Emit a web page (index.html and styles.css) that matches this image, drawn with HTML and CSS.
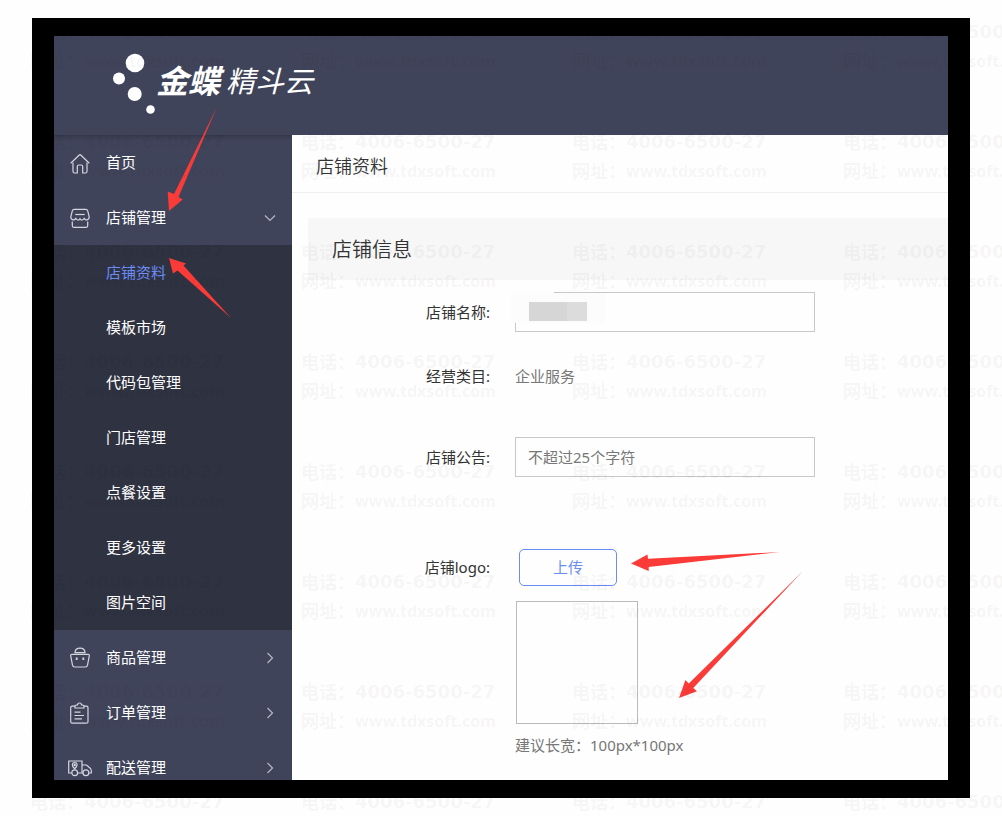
FILE: index.html
```html
<!DOCTYPE html>
<html lang="zh-CN">
<head>
  <meta charset="UTF-8">
  <title>店铺资料 - 精斗云</title>
  <link rel="stylesheet" href="styles.css">
</head>
<body>
  <div class="frame">
    <header class="header">
      <svg class="logo-dots" width="44" height="64" viewBox="0 0 44 64">
        <circle cx="23" cy="11" r="9.3"/>
        <circle cx="7" cy="26.5" r="6"/>
        <circle cx="22.7" cy="42" r="7"/>
        <circle cx="38.5" cy="57.5" r="4.3"/>
      </svg>
      <div class="logo-text"><strong>金蝶</strong><span>精斗云</span></div>
    </header>

    <div class="layout">
      <nav class="sidebar">
        <a class="menu-item" href="#">
          <svg class="icon" viewBox="0 0 24 24">
            <path d="M2.7 12.2 L11 4.2 Q12 3.3 13 4.2 L21.3 12.2"/>
            <path d="M5 11.5 V20.5 Q5 22 6.5 22 H9.3 V15.5 Q9.3 14 10.8 14 H13.2 Q14.7 14 14.7 15.5 V22 H17.5 Q19 22 19 20.5 V11.5"/>
          </svg>
          <span>首页</span>
        </a>
        <a class="menu-item" href="#">
          <svg class="icon" viewBox="0 0 24 24">
            <path d="M6.2 3.3 H17.8 Q19.3 3.3 19.7 4.8 L21.2 10.8 C21.2 14.5 16.7 14.8 16.3 11.8 C15.6 14.6 13 14.6 12 12.8 C11 14.6 8.4 14.6 7.7 11.8 C7.3 14.8 2.8 14.5 2.8 10.8 L4.3 4.8 Q4.7 3.3 6.2 3.3 Z"/>
            <path d="M7.3 8.5 H16.7"/>
            <path d="M4.3 15.5 V19.8 Q4.3 21.3 5.8 21.3 H18.2 Q19.7 21.3 19.7 19.8 V15.5"/>
          </svg>
          <span>店铺管理</span>
          <svg class="arrow" viewBox="0 0 12 12"><path d="M1 3.5 L6 8.5 L11 3.5"/></svg>
        </a>
        <div class="submenu">
          <a class="active" href="#"><span>店铺资料</span></a>
          <a href="#"><span>模板市场</span></a>
          <a href="#"><span>代码包管理</span></a>
          <a href="#"><span>门店管理</span></a>
          <a href="#"><span>点餐设置</span></a>
          <a href="#"><span>更多设置</span></a>
          <a href="#"><span>图片空间</span></a>
        </div>
        <a class="menu-item" href="#">
          <svg class="icon" viewBox="0 0 24 24">
            <path d="M7 6.6 C7.3 0.6 16.7 0.6 17 6.6 Z"/>
            <path d="M4 8.3 H20 Q21.5 8.3 21.3 9.8 L19.5 19.2 Q19.1 21 17.5 21 H6.5 Q4.9 21 4.5 19.2 L2.7 9.8 Q2.5 8.3 4 8.3 Z"/>
            <path stroke-width="1.8" d="M8.7 11.6 V14 M15.3 11.6 V14"/>
          </svg>
          <span>商品管理</span>
          <svg class="arrow" viewBox="0 0 12 12"><path d="M3.5 1 L8.5 6 L3.5 11"/></svg>
        </a>
        <a class="menu-item" href="#">
          <svg class="icon" viewBox="0 0 24 24">
            <path d="M7 5.2 H4.2 Q2.7 5.2 2.7 6.7 V20.7 Q2.7 22.2 4.2 22.2 H18.5 Q20 22.2 20 20.7 V6.7 Q20 5.2 18.5 5.2 H16"/>
            <path d="M7 7 V5 Q7 4 8.5 4 H9.5 C9.5 1.3 13.5 1.3 13.5 4 H14.5 Q16 4 16 5 V7 Z"/>
            <path d="M6.500 11.2 H12.500 M6.5 14.5 H16 M6.5 17.8 H14"/>
          </svg>
          <span>订单管理</span>
          <svg class="arrow" viewBox="0 0 12 12"><path d="M3.5 1 L8.5 6 L3.5 11"/></svg>
        </a>
        <a class="menu-item" href="#">
          <svg class="icon" viewBox="0 0 24 24">
            <path d="M3.7 17 H0.7 V5 H14 V17 H9.7"/>
            <path d="M14 9 H18.5 L22.5 12.5 Q23.3 13.5 23.3 14.5 V17 H21 M14.8 17 H14"/>
            <circle cx="6.7" cy="16.7" r="2.9"/>
            <circle cx="17.9" cy="16.7" r="2.9"/>
            <path d="M6.7 12.7 C3 9.5 4 6.7 6.7 6.7 C9.4 6.7 10.4 9.5 6.7 12.7 Z"/>
            <circle cx="6.7" cy="9" r="0.6"/>
          </svg>
          <span>配送管理</span>
          <svg class="arrow" viewBox="0 0 12 12"><path d="M3.5 1 L8.5 6 L3.5 11"/></svg>
        </a>
      </nav>

      <main class="content">
        <h1>店铺资料</h1>
        <section class="panel">
          <h2>店铺信息</h2>
          <form>
            <div class="row row-name">
              <label for="shop-name">店铺名称:</label>
              <div class="field">
                <input type="text" id="shop-name">
                <div class="mask"><i></i></div>
              </div>
            </div>
            <div class="row row-category">
              <span class="label">经营类目:</span>
              <span class="value">企业服务</span>
            </div>
            <div class="row row-notice">
              <label for="shop-notice">店铺公告:</label>
              <input type="text" id="shop-notice" placeholder="不超过25个字符">
            </div>
            <div class="row">
              <label for="upload">店铺logo:</label>
              <button type="button" id="upload">上传</button>
            </div>
            <div class="logo-field">
              <div class="preview"></div>
              <p class="hint">建议长宽：100px*100px</p>
            </div>
          </form>
        </section>
      </main>
    </div>
  </div>

  <svg class="marks" width="1002" height="816" viewBox="0 0 1002 816">
    <path d="M217 107 L178.5 197 L182.7 199.5 L169 211 L167.7 191.5 L174 194 Z"/>
    <path d="M231 318 L183.5 265.5 L186 263.5 L169 258 L173 273.5 L177.5 270.5 Z"/>
    <path d="M780 552 L648 558.8 L647.5 554.5 L631 563.5 L648.7 571 L648.7 567 Z"/>
    <path d="M802.5 571.5 L688.8 683.5 L685.4 680 L679 698 L697 691.3 L693.3 688 Z"/>
  </svg>

  <div class="watermark" id="watermark" aria-hidden="true"></div>

  <script>
    // Repeat the watermark over the whole page
    const watermark = document.getElementById('watermark');
    for (let i = 0; i < 32; i++) {
      watermark.innerHTML += '<div class="stamp"><span>电话：</span><b>4006-6500-27</b><span>网址：</span><em>www.tdxsoft.com</em></div>';
    }
  </script>
</body>
</html>
```

FILE: styles.css
```css
* {
  box-sizing: border-box;
}

body {
  margin: 0;
  padding: 18px 32px;
  height: 100vh;
  position: relative;
  overflow: hidden;
  background: #fefefe;
  color: #333;
  font-family: "Noto Sans", "Noto Sans CJK SC", sans-serif;
  font-size: 15px;
}

.frame {
  height: 100%;
  border: solid #000;
  border-width: 18px 22px;
  overflow: hidden;
  background: #fefefe;
}

/* Header */
.header {
  position: relative;
  display: flex;
  align-items: center;
  height: 99px;
  padding: 0 58px 3px;
  background: #40445a;
}

.logo-dots {
  fill: #fff;
}

.logo-text {
  display: flex;
  align-items: center;
  gap: 6px;
  padding-bottom: 6px;
  color: #fff;
  font-size: 29px;
  font-style: italic;
  line-height: 40px;
}

.logo-text strong {
  font-size: 32px;
  font-weight: 700;
}

/* Sidebar */
.layout {
  display: flex;
}

.sidebar {
  width: 238px;
  flex-shrink: 0;
  background: #40445a;
  box-shadow: inset 0 4px 4px -2px rgba(0,0,0,0.2);
}

.sidebar a {
  display: flex;
  align-items: center;
  height: 55px;
  color: #fff;
  text-decoration: none;
}

.sidebar span {
  padding-bottom: 2px;
}

.menu-item {
  gap: 14px;
  padding: 0 16px 0 14px;
}

.icon {
  width: 24px;
  height: 24px;
  fill: none;
  stroke: #d4d6e0;
  stroke-width: 1.2;
}

.arrow {
  width: 12px;
  height: 12px;
  margin-left: auto;
  fill: none;
  stroke: #b4b7c4;
  stroke-width: 1.2;
}

.submenu {
  background: #2f3241;
}

.submenu a {
  padding-left: 52px;
}

.submenu .active {
  color: #6b8cf5;
}

/* Content */
.content {
  flex: 1;
  min-width: 0;
  background: #fefefe;
}

h1 {
  margin: 0;
  padding: 3px 24px 0;
  height: 58px;
  border-bottom: 1px solid #eee;
  font-size: 18px;
  font-weight: 350;
  line-height: 57px;
}

.panel {
  margin: 25px 0 0 16px;
}

h2 {
  margin: 0 0 12px;
  padding: 2px 24px 0;
  background: #f7f7f7;
  font-size: 20px;
  font-weight: 350;
  line-height: 60px;
}

.row {
  display: flex;
  align-items: center;
  gap: 25px;
  min-height: 40px;
}

.row-name {
  margin-bottom: 24px;
}

.row-category {
  margin-bottom: 41px;
}

.row-notice {
  margin-bottom: 70px;
}

.row label,
.label {
  width: 182px;
  padding-bottom: 2px;
  text-align: right;
}

.value,
.hint {
  color: #777;
}

.value {
  padding-bottom: 2px;
}

.field {
  position: relative;
}

input {
  display: block;
  width: 300px;
  height: 40px;
  padding: 0 12px;
  border: 1px solid #c8c8c8;
  background: #fefefe;
  color: #333;
  font: inherit;
}

input::placeholder {
  color: #777;
}

/* Hides the shop name */
.mask {
  position: absolute;
  top: 0;
  left: -4px;
  width: 94px;
  height: 31px;
  padding: 10px 18px;
  background: linear-gradient(90deg, #fcfcfc 43px, transparent 43px) 0 0 / 100% 1px no-repeat, linear-gradient(#fcfcfc, #fcfcfc) 0 1px / 100% 100% no-repeat;
}

.mask i {
  display: block;
  width: 58px;
  height: 19px;
  background: linear-gradient(90deg, #d6d6d6 38px, #dcdcdc 38px);
}

button {
  width: 98px;
  height: 37px;
  margin-left: 4px;
  padding: 0 0 2px;
  border: 1px solid #6b8cf5;
  border-radius: 5px;
  background: #fefefe;
  color: #6b8cf5;
  font: inherit;
  cursor: pointer;
}

.logo-field {
  padding: 14px 0 0 208px;
}

.preview {
  width: 122px;
  height: 123px;
  border: 1px solid #bbb;
}

.hint {
  margin: 9px 0 0 -1px;
  line-height: 24px;
}

/* Red arrows drawn over the page */
.marks {
  position: absolute;
  top: 0;
  left: 0;
  fill: #fb3b38;
  pointer-events: none;
}

/* Watermark */
.watermark {
  position: absolute;
  top: 19px;
  left: 30px;
  display: grid;
  grid-template-columns: repeat(4, 271px);
  grid-auto-rows: 110px;
  color: rgba(0,0,0,0.05);
  font-size: 18px;
  font-weight: 700;
  pointer-events: none;
}

.stamp {
  display: grid;
  grid-template-columns: 54px auto;
  grid-auto-rows: 29px;
  align-content: start;
  justify-content: start;
  line-height: 26px;
  white-space: nowrap;
}

.stamp b {
  font-family: "DejaVu Sans", sans-serif;
}

.stamp em {
  font-size: 16px;
  font-style: normal;
}
```
